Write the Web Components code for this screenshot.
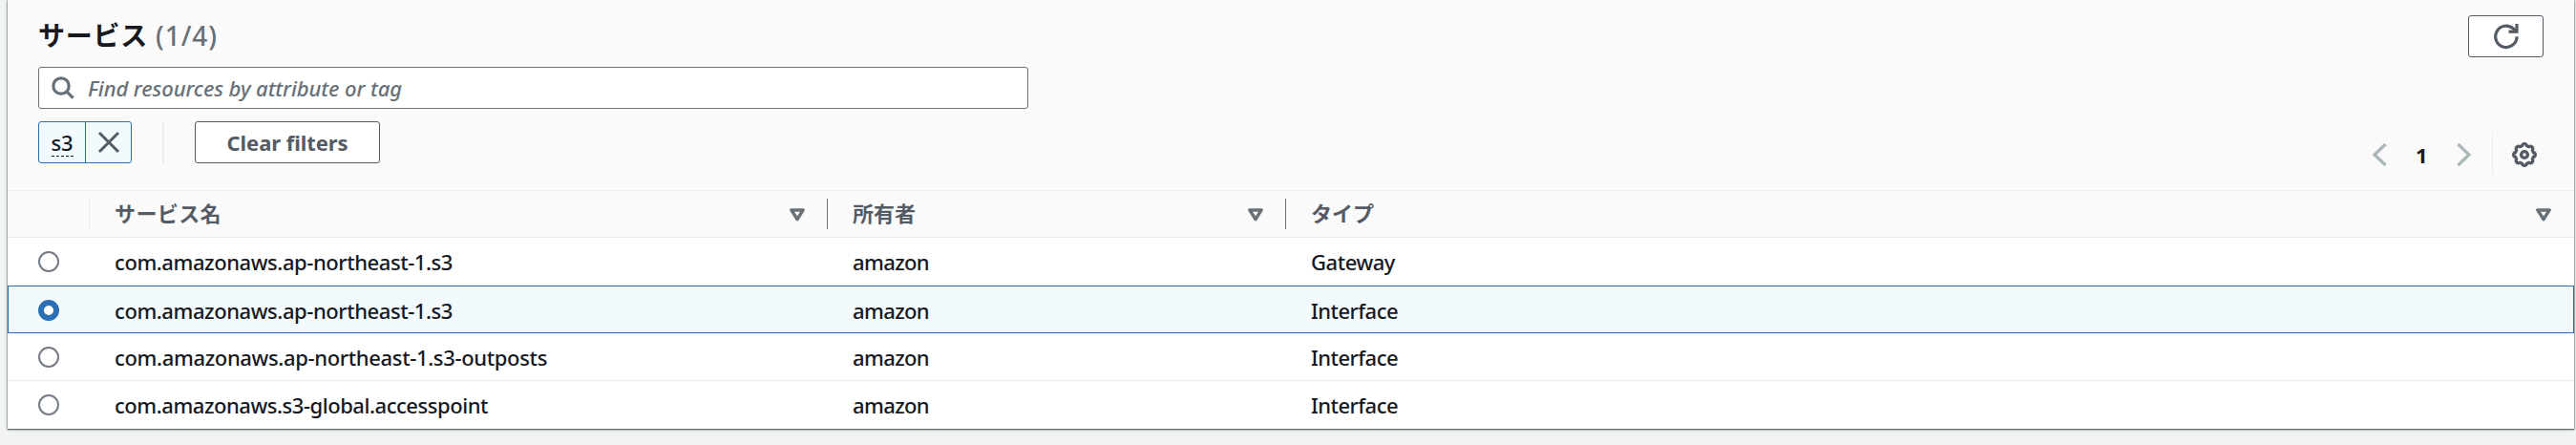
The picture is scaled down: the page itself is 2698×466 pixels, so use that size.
<!DOCTYPE html>
<html lang="ja"><head><meta charset="utf-8"><title>サービス</title>
<style>
html,body{margin:0;height:100%;background:#f2f4f4;overflow:hidden}
body{font-family:"Noto Sans","Noto Sans CJK JP",sans-serif;font-size:22px;color:#16191f}
</style></head><body>
<service-panel></service-panel>
<script>
const define=(name,html,setup)=>customElements.define(name,class extends HTMLElement{
  constructor(){super();this.attachShadow({mode:'open'}).innerHTML=html;}
  connectedCallback(){if(setup)setup.call(this,this.shadowRoot);}
});

/* Single line of text tracked out to a given advance width */
define('fit-text','<style>:host{display:inline-block;white-space:pre;line-height:30px}span{display:inline-block}</style><span></span>',function(r){
  const s=r.querySelector('span');s.textContent=this.getAttribute('text');
  const w=+this.getAttribute('w');
  this.style.width=w+'px';
  const n=[...s.textContent].length;
  s.style.letterSpacing=((w-s.getBoundingClientRect().width)/n)+'px';
});

const icons={
  search:['0 0 24 24','<g fill="none" stroke="#687078" stroke-width="3.2"><circle cx="10" cy="10" r="8.2"/><path d="M15.8 15.8l6.8 6.8"/></g>'],
  close:['0 0 24 24','<path d="M2 2l20 20M22 2L2 22" fill="none" stroke="#545b64" stroke-width="3"/>'],
  refresh:['0 0 28 28','<g fill="none" stroke="#545b64" stroke-width="3.2"><path d="M25.1 14.2A11.2 11.2 0 1 1 21.6 6.2L24.5 9"/><path d="M25 1V9.2H16.5"/></g>'],
  left:['0 0 16 26','<path d="M14.5 2L3 13l11.5 11" fill="none" stroke="#aab7b8" stroke-width="3.2"/>'],
  right:['0 0 16 26','<path d="M1.5 2l11.5 11L1.5 24" fill="none" stroke="#aab7b8" stroke-width="3.2"/>'],
  sort:['0 0 16 14','<path d="M1.8 1.9H14.2L8 11.6Z" fill="none" stroke="#687078" stroke-width="3.5" stroke-linejoin="round"/>'],
  gear:['0 0 26 26','']
};
{
  let d='';
  for(let i=0;i<=96;i++){const a=i/96*2*Math.PI,t=Math.cos(8*a);
    const r=10.4+.9*Math.max(-1,Math.min(1,t*1.6));
    d+=(i?'L':'M')+(13+r*Math.sin(a)).toFixed(2)+' '+(13-r*Math.cos(a)).toFixed(2);}
  icons.gear[1]='<g fill="none" stroke="#545b64" stroke-width="3.3"><path d="'+d+'Z" stroke-linejoin="round"/><circle cx="13" cy="13" r="3.4"/></g>';
}
define('ui-icon','<style>:host{display:block;flex:none}svg{display:block;width:100%;height:100%}</style><svg></svg>',function(r){
  const [vb,body]=icons[this.getAttribute('name')],b=vb.split(' ');
  const s=r.querySelector('svg');s.setAttribute('viewBox',vb);s.innerHTML=body;
  this.style.width=b[2]+'px';this.style.height=b[3]+'px';
});

define('ui-button','<style>:host{display:flex;align-items:center;justify-content:center;box-sizing:border-box;height:44px;border:1px solid #545b64;border-radius:3px;background:#fff;color:#545b64;font-weight:700}</style><slot></slot>');

define('search-field',`<style>:host{display:flex;align-items:center;box-sizing:border-box;width:1037px;height:44px;border:1px solid #687078;border-radius:3px;background:#fff;color:#687078;font-style:italic;font-weight:500;padding-left:13px}
fit-text{margin-left:14px}</style><ui-icon name="search"></ui-icon><fit-text text="Find resources by attribute or tag" w="329"></fit-text>`);

define('filter-token',`<style>:host{display:flex;box-sizing:border-box;width:98px;height:44px;border:1px solid #2b6fb5;border-radius:3px;background:#f2fafd;overflow:hidden}
.l{width:48px;border-right:1px solid #2b6fb5;display:flex;justify-content:center;align-items:center;font-weight:500}
.l fit-text{border-bottom:1px dashed #16191f;line-height:28px;height:28px}
.x{flex:1;display:flex;justify-content:center;align-items:center}</style>
<div class="l"><fit-text text="s3" w="23"></fit-text></div><div class="x"><ui-icon name="close"></ui-icon></div>`);

define('panel-header',`<style>:host{display:block;box-sizing:border-box;height:200px;border-bottom:1px solid #eaeded;padding:16px 32px 0 32px}
.top{display:flex;justify-content:space-between;height:54px}
h2{margin:0;display:flex;font-size:28px;gap:8px;padding-top:6px;height:34px}
h2 span{display:flex;font-weight:500;color:#687078}
.btn{width:79px}
.row{display:flex;margin-top:13px;justify-content:space-between;align-items:flex-start}
.f{display:flex;align-items:center;height:44px}
.sep{width:2px;height:44px;background:#eaeded;margin:0 32px}
.clear{width:194px}
.pg{display:flex;align-items:center;height:43px;margin-top:13px;padding-right:7px}
.pg fit-text{font-weight:700;margin:0 32px 0 30px}
.ps{width:1px;height:43px;background:#eaeded;margin:0 20px 0 21px}
</style>
<div class="top"><h2><fit-text text="サービス" w="115"></fit-text><span><fit-text text="(1/4)" w="65"></fit-text></span></h2><ui-button class="btn"><ui-icon name="refresh"></ui-icon></ui-button></div>
<search-field></search-field>
<div class="row"><div class="f"><filter-token></filter-token><div class="sep"></div><ui-button class="clear"><fit-text text="Clear filters" w="127"></fit-text></ui-button></div>
<div class="pg"><ui-icon name="left"></ui-icon><fit-text text="1" w="11"></fit-text><ui-icon name="right"></ui-icon><div class="ps"></div><ui-icon name="gear"></ui-icon></div></div>`);

const grid='display:grid;grid-template-columns:112px 773px 480px 1fr;align-items:center;box-sizing:border-box;';
define('table-head',`<style>:host{${grid}height:49px;border-bottom:1px solid #eaeded;color:#545b64;font-weight:700}
div{display:flex;align-items:center;justify-content:space-between;height:32px;box-sizing:border-box}
.a{border-right:1px solid #eaeded;width:86px}
.c{border-right:1px solid #687078;padding-right:23px;margin-right:26px}
.d{padding-right:24px}
fit-text{margin-top:-2px}
ui-icon{margin-top:1px}</style>
<div class="a"></div><div class="c"><fit-text text="サービス名" w="112"></fit-text><ui-icon name="sort"></ui-icon></div>
<div class="c"><fit-text text="所有者" w="66"></fit-text><ui-icon name="sort"></ui-icon></div>
<div class="d"><fit-text text="タイプ" w="66"></fit-text><ui-icon name="sort"></ui-icon></div>`);

define('service-row',`<style>:host{${grid}height:50px;border-bottom:1px solid #eaeded;font-weight:500}
:host([plain]){border-bottom-color:transparent}
:host([selected]){border:1px solid #2b6fb5;background:#f2fafd;grid-template-columns:111px 773px 480px 1fr}
.r{box-sizing:border-box;width:22px;height:22px;border-radius:50%;border:2px solid #757c84;margin:1px 0 0 32px;background:#fff}
:host([selected]) .r{border:6px solid #2b6fb5;margin-left:31px}
fit-text{margin-top:1px}</style><div class="r"></div>`,function(r){
  for(const [k,w] of [['name','nw'],['owner','ow'],['type','tw']]){
    const t=document.createElement('fit-text');t.setAttribute('text',this.getAttribute(k));t.setAttribute('w',this.getAttribute(w));r.append(t);}
});

define('service-panel',`<style>:host{display:block;width:2688px;height:449px;margin-left:8px;background:#fff;box-shadow:0 1px 1px #5f6b6d,0 1px 3px rgba(0,28,36,.35),-1px 0 1px rgba(0,28,36,.15),1px 0 1px rgba(0,28,36,.15)}
.h{background:#fafafa}</style>
<div class="h"><panel-header></panel-header><table-head></table-head></div>
<service-row plain name="com.amazonaws.ap-northeast-1.s3" nw="354" owner="amazon" ow="80" type="Gateway" tw="88"></service-row>
<service-row selected name="com.amazonaws.ap-northeast-1.s3" nw="354" owner="amazon" ow="80" type="Interface" tw="91"></service-row>
<service-row name="com.amazonaws.ap-northeast-1.s3-outposts" nw="453" owner="amazon" ow="80" type="Interface" tw="91"></service-row>
<service-row plain name="com.amazonaws.s3-global.accesspoint" nw="391" owner="amazon" ow="80" type="Interface" tw="91"></service-row>`);
</script></body></html>
